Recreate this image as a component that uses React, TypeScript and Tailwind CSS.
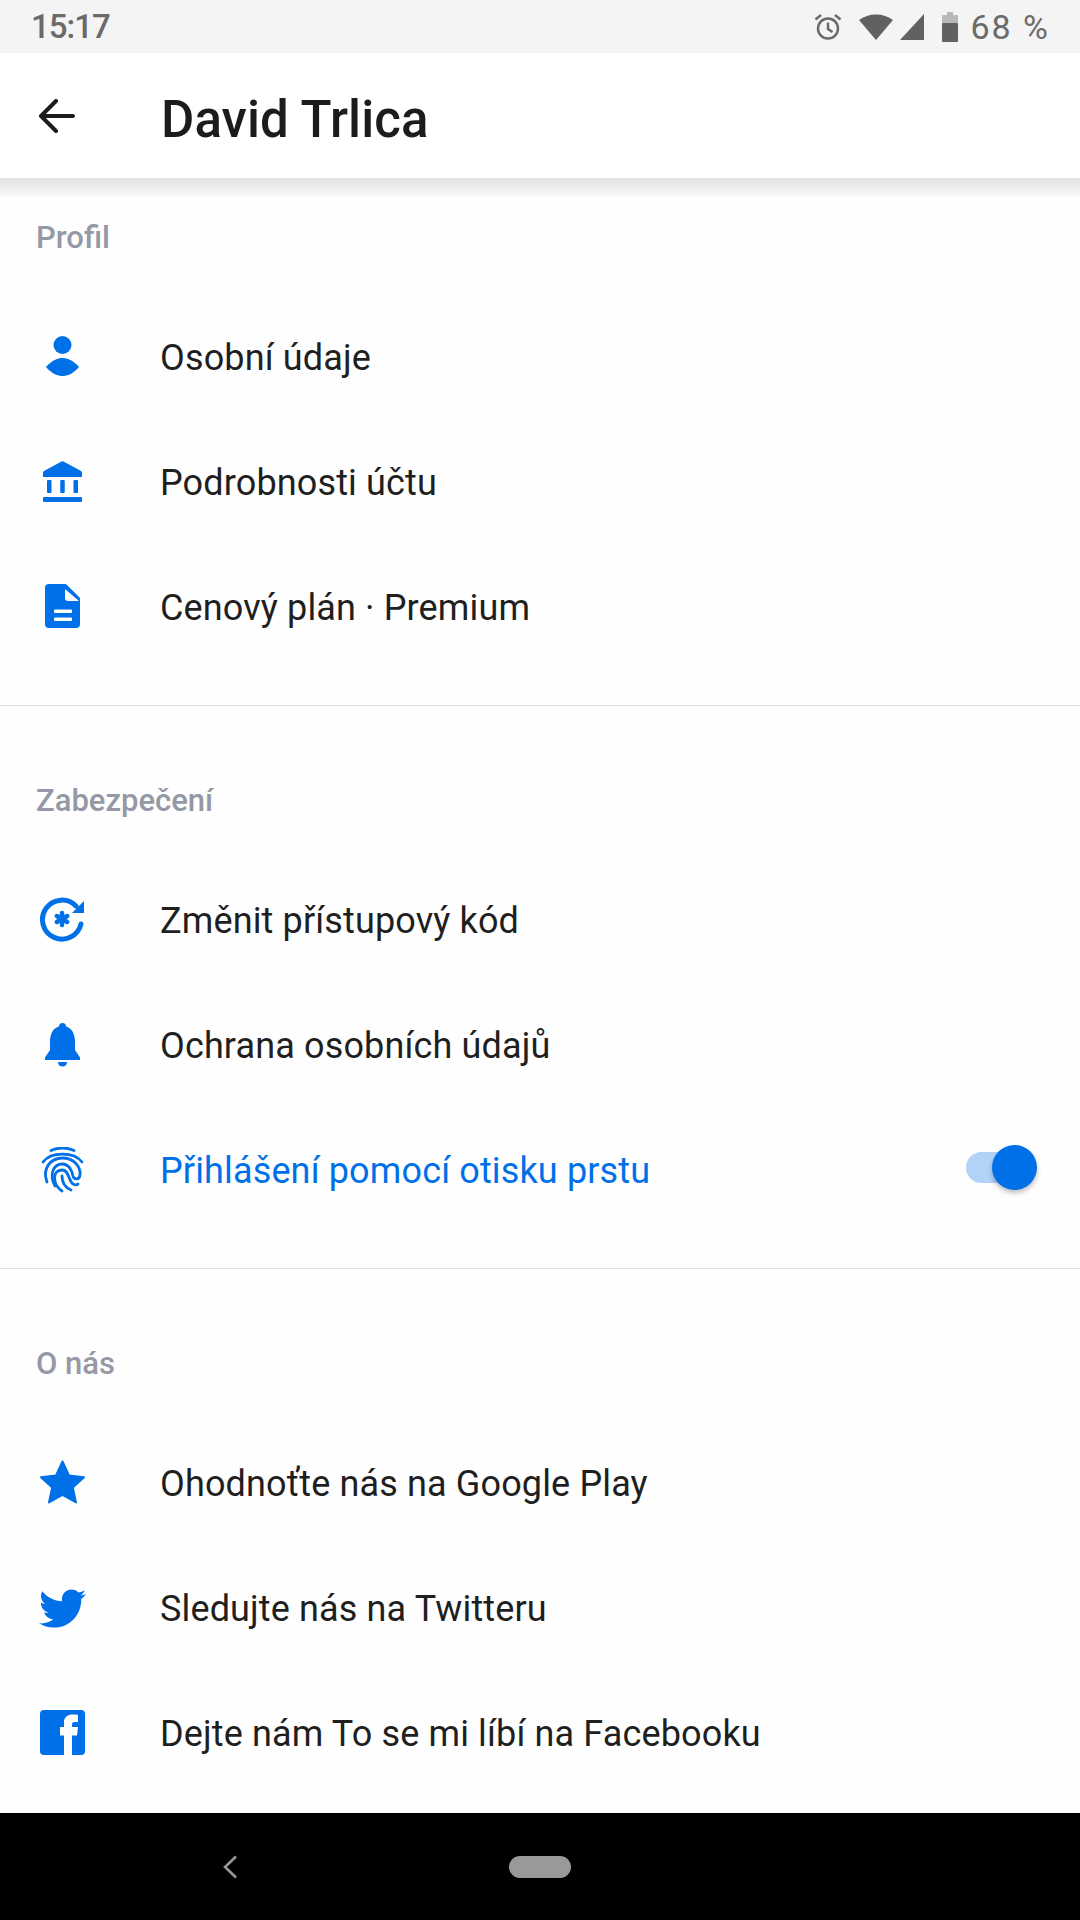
import React from 'react';
import { FaTwitter } from 'react-icons/fa';

const PersonIcon = () => (
  <svg viewBox="0 0 48 48" className="w-12 h-12 fill-[#0070e9]">
    <circle cx="24.5" cy="11" r="9" />
    <path d="M8 33C14 26 20 24 24.5 24C29 24 35 26 41 33C35 40 29 42 24.5 42C20 42 14 40 8 33Z" />
  </svg>
);

const BankIcon = () => (
  <svg viewBox="0 0 48 48" className="w-12 h-12 fill-[#0070e9]">
    <path d="M5 14Q5 12.500 6 12L23.500 2.500Q24.500 2 25.500 2.500L43 12Q44 12.500 44 14V18H5Z" />
    <rect x="9" y="21" width="4.500" height="13" rx="1" />
    <rect x="22.250" y="21" width="4.500" height="13" rx="1" />
    <rect x="35.500" y="21" width="4.500" height="13" rx="1" />
    <rect x="5" y="38" width="39" height="5" rx="1" />
  </svg>
);

const DocIcon = () => (
  <svg viewBox="0 0 48 48" className="w-12 h-12">
    <path className="fill-[#0070e9]" d="M11 0H28L42 14V40Q42 44 38 44H11Q7 44 7 40V4Q7 0 11 0Z" />
    <path className="fill-white" d="M27 5L41 17H30Q27 17 27 14Z" />
    <rect className="fill-white" x="16" y="25.500" width="18" height="3.500" rx="1" />
    <rect className="fill-white" x="16" y="33.500" width="18" height="3.500" rx="1" />
  </svg>
);

const ResetIcon = () => (
  <svg viewBox="0 0 48 48" className="w-12 h-12">
    <path d="M38 9A19.500 19.500 0 1 0 43 27" fill="none" strokeWidth="5" strokeLinecap="round" className="stroke-[#0070e9]" />
    <path d="M46 4V16H34Z" className="fill-[#0070e9]" />
    <g strokeWidth="4.500" strokeLinecap="round" className="stroke-[#0070e9]">
      <path d="M24 16V28" />
      <path d="M18.800 19L29.200 25" />
      <path d="M29.200 19L18.800 25" />
    </g>
  </svg>
);

const BellIcon = () => (
  <svg viewBox="0 0 48 48" className="w-12 h-12 fill-[#0070e9]">
    <circle cx="24.500" cy="4.500" r="3.500" />
    <path d="M24.500 4C15 4 12 12 12 20V28L7 35.500V38H42V35.500L37 28V20C37 12 34 4 24.500 4Z" />
    <path d="M20 40H29C29 43 27 44.500 24.500 44.500C22 44.500 20 43 20 40Z" />
  </svg>
);

const FingerprintIcon = () => (
  <svg viewBox="0 0 48 48" className="w-12 h-12 fill-none stroke-[#0070e9]" strokeWidth="2.800" strokeLinecap="round">
    <path d="M13 3.500C20 0.500 29 0.500 36 3.500" />
    <path d="M5 15C13 4.500 36 4.500 44 15" />
    <path d="M9 35C4 22 12 11 24.500 11C36 11 43 20 42 28C41.500 33 36 33 35 29C34 24 31 17 24.500 17C15 17 11 28 17 39" />
    <path d="M24 44C15 38 13 23 24.500 23C31 23 30 33 35 37C37 38 39 38 40 37" />
    <path d="M33 43C26 40 24 35 24 29" />
  </svg>
);

const StarIcon = () => (
  <svg viewBox="0 0 48 48" className="w-12 h-12 fill-[#0070e9] stroke-[#0070e9]" strokeWidth="2" strokeLinejoin="round">
    <path d="M24.500 1.500L31 15.500L46 17.200L34.800 27.500L38 42.500L24.500 35L11 42.500L14.200 27.500L3 17.200L18 15.500Z" />
  </svg>
);

const FacebookIcon = () => (
  <svg viewBox="0 0 48 48" className="w-12 h-12">
    <rect x="2" y="0" width="45" height="45" rx="4" className="fill-[#0070e9]" />
    <path className="fill-white" d="M26 45V25.500H22V17H26V12C26 7 30 4.500 34.500 4.500C37 4.500 39 4.700 40 4.900V12H36.500C34.500 12 34 13 34 15V17H40L39 25.500H34V45Z" />
  </svg>
);

const rows = [
  {
    title: 'Profil',
    first: true,
    items: [
      { label: 'Osobní údaje', icon: <PersonIcon /> },
      { label: 'Podrobnosti účtu', icon: <BankIcon /> },
      { label: 'Cenový plán · Premium', icon: <DocIcon /> },
    ],
  },
  {
    title: 'Zabezpečení',
    items: [
      { label: 'Změnit přístupový kód', icon: <ResetIcon /> },
      { label: 'Ochrana osobních údajů', icon: <BellIcon /> },
      { label: 'Přihlášení pomocí otisku prstu', icon: <FingerprintIcon />, active: true },
    ],
  },
  {
    title: 'O nás',
    last: true,
    items: [
      { label: 'Ohodnoťte nás na Google Play', icon: <StarIcon /> },
      { label: 'Sledujte nás na Twitteru', icon: <FaTwitter size={47} className="text-[#0070e9]" /> },
      { label: 'Dejte nám To se mi líbí na Facebooku', icon: <FacebookIcon /> },
    ],
  },
];

export default function App() {
  return (
    <div className="flex flex-col w-[1080px] h-[1920px] bg-[#fefefe] font-['Roboto',sans-serif] overflow-hidden">
      {/* Status bar */}
      <div className="flex items-center justify-between h-[53px] bg-[#f4f4f4] pl-[31px] pr-[30px] text-[#6a6a6a]">
        <span className="text-[33px] leading-none font-medium tracking-[-1px]">15:17</span>
        <div className="flex items-center text-[#6b6b6b]">
          <svg viewBox="0 0 28 28" className="w-[28px] h-[28px] fill-none stroke-[#6b6b6b]" strokeWidth="2.500">
            <circle cx="14" cy="15.500" r="10" />
            <path d="M14 9.500V16L18.500 19" />
            <path d="M1.500 6.500L7 2M26.500 6.500L21 2" />
          </svg>
          <svg viewBox="0 0 36 28" className="w-[36px] h-[28px] ml-[16px] fill-[#616161]">
            <path d="M1 7C10-0.500 26-0.500 35 7L18 27Z" />
          </svg>
          <svg viewBox="0 0 26 28" className="w-[26px] h-[28px] ml-[5px] fill-[#616161]">
            <path d="M25 1V27H1Z" />
          </svg>
          <svg viewBox="0 0 16 30" className="w-[16px] h-[30px] ml-[17px]">
            <path className="fill-[#b9b9b9]" d="M5 0H11V3H16V11H0V3H5Z" />
            <rect className="fill-[#616161]" y="11" width="16" height="19" rx="1" />
          </svg>
          <span className="ml-[12px] text-[34px] leading-none tracking-[2px]">68 %</span>
        </div>
      </div>

      {/* Header */}
      <div className="flex items-center h-[125px] bg-white">
        <div className="flex justify-center w-[161px] pr-[48px]">
          <svg viewBox="0 0 37 34" className="w-[37px] h-[34px] fill-none stroke-[#1c1c1c]" strokeWidth="4" strokeLinecap="round" strokeLinejoin="round">
            <path d="M35 17H3M18 2L3 17L18 32" />
          </svg>
        </div>
        <h1 className="pt-[8px] text-[51px] leading-none font-medium text-[#1c1c1c] tracking-[0.1px]">David Trlica</h1>
      </div>
      <div className="h-[18px] bg-gradient-to-b from-[#e2e2e4] to-[#f8f8f9]"></div>

      {/* Sections */}
      {rows.map((section) => (
        <section key={section.title} className={section.last ? '' : 'border-b border-[#e3e3e3] pb-[35px]'}>
          <h2 className={`${section.first ? 'pt-[22px]' : 'pt-[75px]'} mb-[37px] pl-[36px] text-[31px] leading-[40px] font-medium text-[#9499a5]`}>
            {section.title}
          </h2>
          {section.items.map((item) => (
            <div key={item.label} className="flex items-center h-[125px]">
              <div className="flex justify-center w-[48px] ml-[38px] mr-[74px]">{item.icon}</div>
              <span className={`text-[36px] leading-none tracking-[0.14px] ${item.active ? 'text-[#0070e9]' : 'text-[#1f1f1f]'}`}>{item.label}</span>
              {item.active && (
                <div className="relative ml-auto mr-[60px] mb-[6px] w-[54px] h-[31px] rounded-full bg-[#b2d2f8]">
                  <div className="absolute right-[-17px] top-[-7px] w-[45px] h-[45px] rounded-full bg-[#0070e9] shadow-[0_3px_5px_rgba(0,0,0,0.25)]"></div>
                </div>
              )}
            </div>
          ))}
        </section>
      ))}

      <div className="flex-1"></div>

      {/* Nav bar */}
      <div className="flex items-center h-[107px] bg-black pl-[223px]">
        <svg viewBox="0 0 14 24" className="w-[14px] h-[24px] fill-none stroke-[#9a989b]" strokeWidth="2.500">
          <path d="M13 1.500L2 12L13 22.500" />
        </svg>
        <div className="ml-[272px] w-[62px] h-[22px] rounded-full bg-[#9a989b]"></div>
      </div>
    </div>
  );
}
